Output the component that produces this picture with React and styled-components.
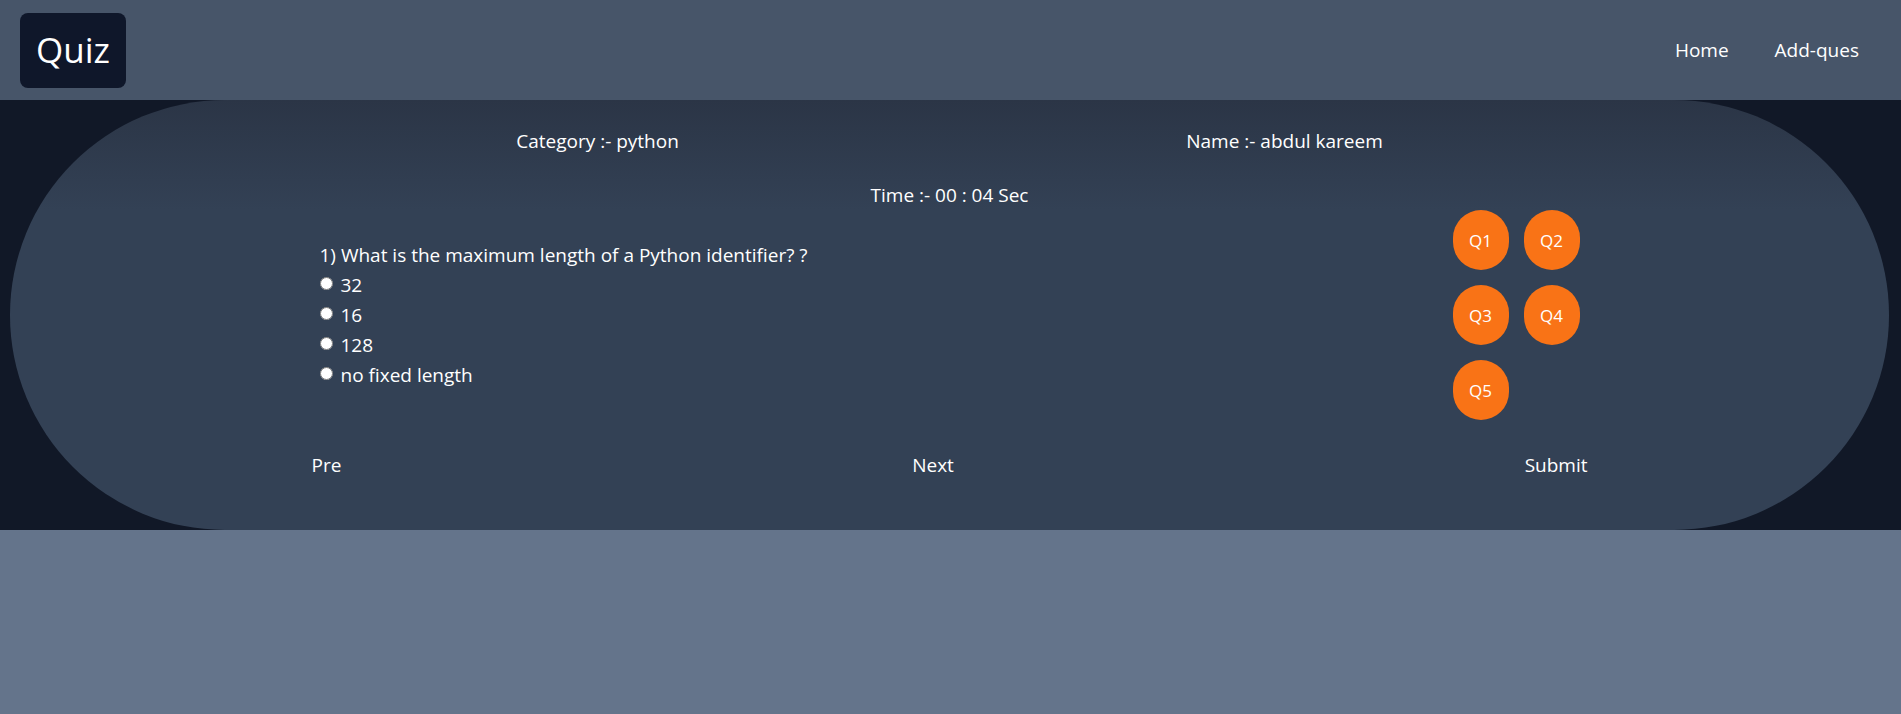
import React, { useState } from "react";
import styled, { createGlobalStyle } from "styled-components";

const GlobalStyle = createGlobalStyle`
  * {
    box-sizing: border-box;
  }
  body {
    margin: 0;
    font-family: "Open Sans", "Noto Sans", sans-serif;
    background: #64748b;
  }
`;

const Page = styled.div`
  min-height: 100vh;
  background: #64748b;
`;

const Header = styled.header`
  height: 100px;
  display: flex;
  align-items: center;
  justify-content: space-between;
  padding: 0 42px 0 20px;
  background: #475569;
`;

const Logo = styled.div`
  background: #0f172a;
  color: #fff;
  font-size: 35px;
  line-height: 42px;
  padding: 16px 16px 17px;
  border-radius: 8px;
`;

const Nav = styled.nav`
  display: flex;
  gap: 46px;
`;

const NavLink = styled.a`
  color: #fff;
  font-size: 19px;
  text-decoration: none;
  cursor: pointer;
`;

const Main = styled.main`
  background: #111827;
  padding: 0 12px 0 10px;
`;

const Panel = styled.section`
  height: 430px;
  border-radius: 215px;
  background: linear-gradient(to bottom, #2b3546 0, #334155 110px);
  color: #fff;
  display: flex;
  flex-direction: column;
  font-size: 19px;
  line-height: 26px;
`;

const InfoRow = styled.div`
  width: 1374px;
  margin: 28px auto 0;
  display: flex;
  justify-content: space-around;
`;

const Timer = styled.div`
  margin-top: 28px;
  text-align: center;
`;

const Middle = styled.div`
  width: 1276px;
  margin: 2px auto 0;
  display: flex;
  justify-content: space-between;
  align-items: center;
  padding: 0 8px;
`;

const Question = styled.div`
  line-height: 30px;
`;

const Option = styled.label`
  display: flex;
  align-items: center;
  cursor: pointer;
`;

const Radio = styled.input`
  width: 13px;
  height: 13px;
  margin: 0 8px 4px 0;
`;

const QGrid = styled.div`
  display: grid;
  grid-template-columns: repeat(2, 56px);
  gap: 15px;
`;

const QButton = styled.button`
  width: 56px;
  height: 60px;
  border: none;
  border-radius: 9999px;
  background: #f97316;
  color: #fff;
  font-family: inherit;
  font-size: 17px;
  cursor: pointer;
`;

const Footer = styled.div`
  width: 1276px;
  margin: 32px auto 0;
  display: flex;
  justify-content: space-between;
`;

const TextButton = styled.button`
  background: transparent;
  border: none;
  padding: 0;
  color: #fff;
  font-family: inherit;
  font-size: 19px;
  line-height: 26px;
  cursor: pointer;
`;

const options = ["32", "16", "128", "no fixed length"];

export default function App() {
  const [picked, setPicked] = useState(null);

  return (
    <Page>
      <GlobalStyle />
      <Header>
        <Logo>Quiz</Logo>
        <Nav>
          <NavLink>Home</NavLink>
          <NavLink>Add-ques</NavLink>
        </Nav>
      </Header>
      <Main>
        <Panel>
          <InfoRow>
            <div>Category :- python</div>
            <div>Name :- abdul kareem</div>
          </InfoRow>
          <Timer>Time :- 00 : 04 Sec</Timer>
          <Middle>
            <Question>
              <div>1) What is the maximum length of a Python identifier? ?</div>
              {options.map(o => (
                <Option key={o}>
                  <Radio
                    type="radio"
                    name="answer"
                    checked={picked === o}
                    onChange={() => setPicked(o)}
                  />
                  {o}
                </Option>
              ))}
            </Question>
            <QGrid>
              {[1, 2, 3, 4, 5].map(n => (
                <QButton key={n}>Q{n}</QButton>
              ))}
            </QGrid>
          </Middle>
          <Footer>
            <TextButton>Pre</TextButton>
            <TextButton>Next</TextButton>
            <TextButton>Submit</TextButton>
          </Footer>
        </Panel>
      </Main>
    </Page>
  );
}
